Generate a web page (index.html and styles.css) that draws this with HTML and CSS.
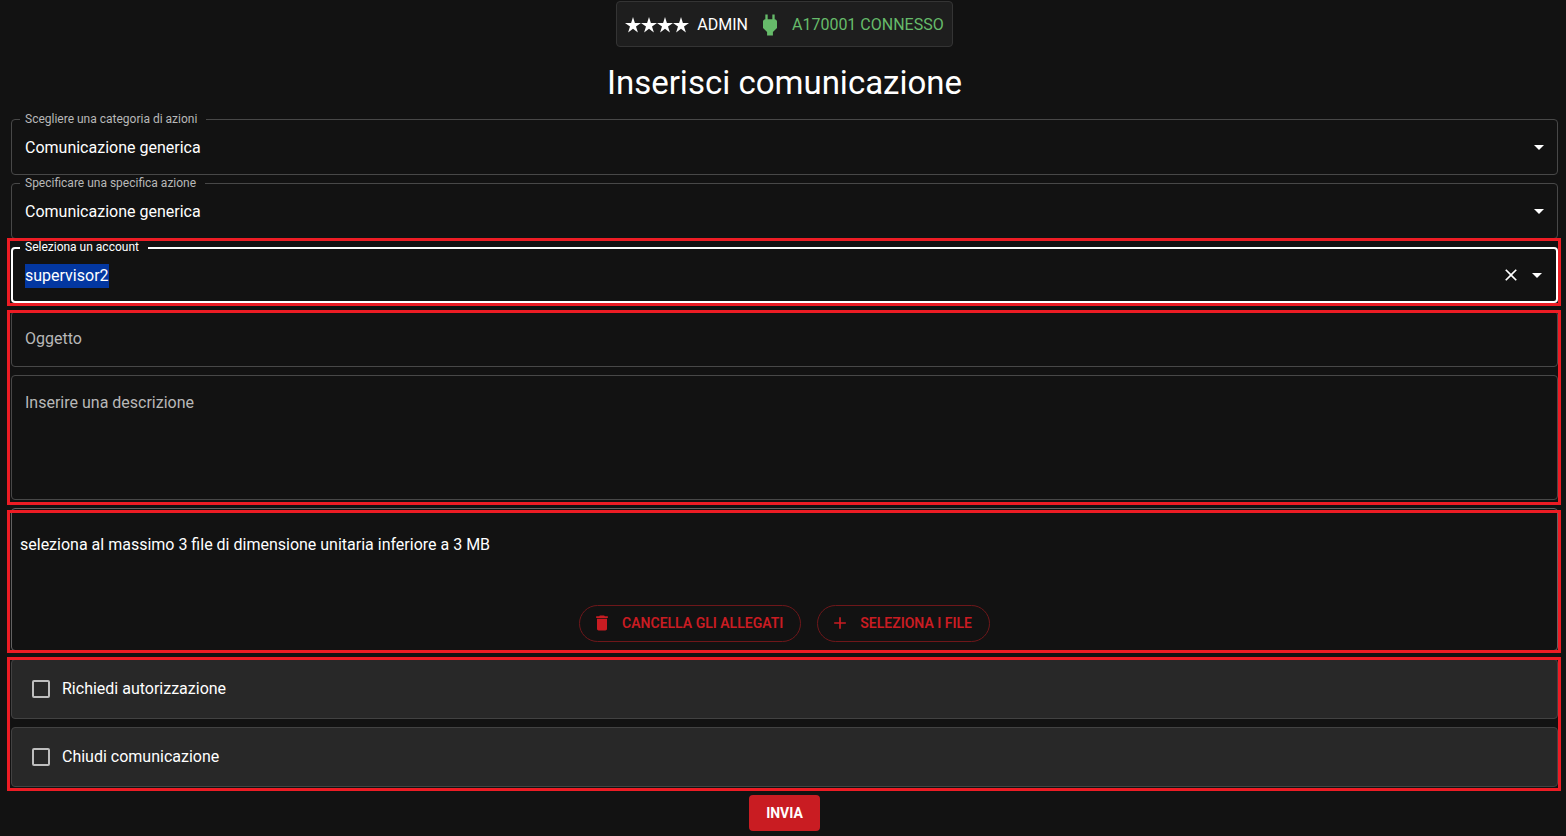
FILE: index.html
```html
<!DOCTYPE html>
<html lang="it">
<head>
  <meta charset="UTF-8" />
  <meta name="viewport" content="width=device-width, initial-scale=1" />
  <title>Inserisci comunicazione</title>
  <link rel="stylesheet" href="styles.css">
</head>
<body>

  <svg class="sprite" aria-hidden="true">
    <symbol id="star" viewBox="0 0 16 16"><path d="M8 0l1.9 5.9H16l-5 3.6 1.9 6L8 11.8l-4.9 3.7 1.9-6-5-3.6h6.1z"/></symbol>
    <symbol id="arrow" viewBox="0 0 24 24"><path d="M7 10l5 5 5-5z"/></symbol>
  </svg>

  <header>
    <div class="status">
      <span class="stars">
        <svg><use href="#star"/></svg><svg><use href="#star"/></svg><svg><use href="#star"/></svg><svg><use href="#star"/></svg>
      </span>
      <span class="role">ADMIN</span>
      <svg class="plug" viewBox="0 0 24 24"><path d="M16.01 7L16 3h-2v4h-4V3H8v4h-.01C7 6.99 6 7.99 6 8.99v5.49L9.5 18v3h5v-3l3.5-3.51v-5.5c0-1-1-2-1.99-1.99z"/></svg>
      <span class="connected">A170001 CONNESSO</span>
    </div>
    <h1>Inserisci comunicazione</h1>
  </header>

  <form>
    <div class="field">
      <label for="categoria">Scegliere una categoria di azioni</label>
      <select id="categoria">
        <option>Comunicazione generica</option>
      </select>
      <svg class="arrow"><use href="#arrow"/></svg>
    </div>

    <div class="field">
      <label for="azione">Specificare una specifica azione</label>
      <select id="azione">
        <option>Comunicazione generica</option>
      </select>
      <svg class="arrow"><use href="#arrow"/></svg>
    </div>

    <div class="marked marked-account">
      <div class="field active">
        <label for="account">Seleziona un account</label>
        <input type="text" id="account" value="supervisor2" autocomplete="off" spellcheck="false">
        <div class="adornment">
          <button type="button" class="icon-btn clear" aria-label="Cancella"><svg viewBox="0 0 24 24"><path d="M19 6.41L17.59 5 12 10.59 6.41 5 5 6.41 10.59 12 5 17.59 6.41 19 12 13.41 17.59 19 19 17.59 13.41 12z"/></svg></button>
          <button type="button" class="icon-btn" aria-label="Apri"><svg><use href="#arrow"/></svg></button>
        </div>
      </div>
    </div>

    <div class="marked marked-text">
      <div class="field">
        <input type="text" id="oggetto" placeholder="Oggetto" aria-label="Oggetto">
      </div>
      <div class="field">
        <textarea id="descrizione" placeholder="Inserire una descrizione" aria-label="Inserire una descrizione"></textarea>
      </div>
    </div>

    <div class="marked marked-files">
      <div class="files">
        <p>seleziona al massimo 3 file di dimensione unitaria inferiore a 3 MB</p>
        <div class="files-actions">
          <button type="button" class="pill"><svg viewBox="0 0 24 24"><path d="M6 19c0 1.1.9 2 2 2h8c1.1 0 2-.9 2-2V7H6v12zM19 4h-3.5l-1-1h-5l-1 1H5v2h14V4z"/></svg>CANCELLA GLI ALLEGATI</button>
          <button type="button" class="pill"><svg viewBox="0 0 24 24"><path d="M19 13h-6v6h-2v-6H5v-2h6V5h2v6h6v2z"/></svg>SELEZIONA I FILE</button>
        </div>
      </div>
    </div>

    <div class="marked marked-options">
      <label class="option"><input type="checkbox">Richiedi autorizzazione</label>
      <label class="option"><input type="checkbox">Chiudi comunicazione</label>
    </div>

    <button type="submit" class="submit">INVIA</button>
  </form>

  <script>
    const account = document.getElementById("account");
    account.focus();
    account.select();
  </script>

</body>
</html>
```
FILE: styles.css
```css
* {
  margin: 0;
  padding: 0;
  box-sizing: border-box;
}
body {
  font-family: Roboto, "Liberation Sans", sans-serif;
  font-size: 16px;
  line-height: 24px;
  background: #121212;
  color: #fff;
  padding: 1px 8px 5px 11px;
}
svg {
  display: block;
  fill: currentColor;
}
.sprite {
  display: none;
}
button, input, select, textarea {
  font: inherit;
  color: inherit;
}
header {
  display: flex;
  flex-direction: column;
  align-items: center;
}
.status {
  display: flex;
  align-items: center;
  gap: 8px;
  height: 46px;
  padding: 1px 8px 0;
  background: #1e1e1e;
  border: 1px solid #343434;
  border-radius: 4px;
}
.stars {
  display: flex;
}
.stars svg {
  width: 16px;
  height: 16px;
}
.plug {
  width: 28px;
  height: 28px;
}
.plug, .connected {
  color: #66bb6a;
}
h1 {
  font-size: 33px;
  font-weight: 400;
  line-height: 40px;
  margin: 16px 0;
}
form {
  display: flex;
  flex-direction: column;
  gap: 8px;
}
.field {
  position: relative;
  display: flex;
  min-height: 56px;
  border: 1px solid #484848;
  border-radius: 4px;
}
.field label {
  position: absolute;
  top: -9px;
  left: 8px;
  padding: 0 9px 0 5px;
  font-size: 12px;
  line-height: 16px;
  color: #b8b8b8;
  background: #121212;
}
.field select, .field input, .field textarea {
  flex: 1;
  min-width: 0;
  padding: 0 13px;
  background: transparent;
  border: none;
  outline: none;
  appearance: none;
}
.field select {
  padding-top: 2px;
}
.field textarea {
  height: 123px;
  padding-top: 15px;
  resize: none;
}
.field option {
  background: #1e1e1e;
}
::placeholder {
  color: #b8b8b8;
  opacity: 1;
}
::selection {
  color: #fff;
  background: rgba(3, 56, 163, 0.99);
}
.field .arrow {
  position: absolute;
  top: 15px;
  right: 6px;
  width: 24px;
  height: 24px;
  pointer-events: none;
}
.field.active {
  border: 2px solid #fff;
}
.field.active label {
  top: -10px;
  left: 7px;
  color: #fff;
}
.field.active input {
  padding: 2px 12px 0;
}
.adornment {
  display: flex;
  align-items: center;
  gap: 4px;
  padding-right: 7px;
}
.icon-btn {
  background: none;
  border: none;
  cursor: pointer;
}
.icon-btn svg {
  width: 24px;
  height: 24px;
}
.icon-btn.clear svg {
  width: 20px;
  height: 20px;
}

/* red frames around the highlighted areas */
.marked {
  position: relative;
  display: flex;
  flex-direction: column;
  gap: 8px;
}
.marked::after {
  content: "";
  position: absolute;
  inset: -1px -3px -5px -4px;
  border: 3px solid #ed1c24;
  pointer-events: none;
}
.marked-account::after {
  top: -9px;
  bottom: -3px;
}
.marked-files::after {
  top: 2px;
  bottom: -2px;
}
.marked-options::after {
  top: -2px;
  bottom: -4px;
}

.files {
  display: flex;
  flex-direction: column;
  gap: 48px;
  padding: 24px 8px 8px;
  border: 1px solid #626262;
  border-radius: 4px;
}
.files-actions {
  display: flex;
  flex-wrap: wrap;
  justify-content: center;
  gap: 16px;
}
.pill {
  display: flex;
  align-items: center;
  gap: 10px;
  height: 37px;
  padding: 0 17px 1px 12px;
  font-size: 14px;
  font-weight: 600;
  color: #c91c22;
  background: transparent;
  border: 1px solid #6e171a;
  border-radius: 19px;
  cursor: pointer;
}
.pill svg {
  width: 20px;
  height: 20px;
}
.option {
  display: flex;
  align-items: center;
  gap: 12px;
  min-height: 60px;
  padding: 0 20px;
  background: #282828;
  border: 1px solid #424242;
  border-radius: 4px;
}
.option input {
  width: 18px;
  height: 18px;
  border: 2px solid #bebebe;
  border-radius: 2px;
  appearance: none;
}
.option input:checked {
  background: #c91c22;
}
.submit {
  align-self: center;
  height: 36px;
  padding: 0 17px;
  font-size: 14px;
  font-weight: 700;
  background: #c91c22;
  border: none;
  border-radius: 4px;
  cursor: pointer;
}
```
